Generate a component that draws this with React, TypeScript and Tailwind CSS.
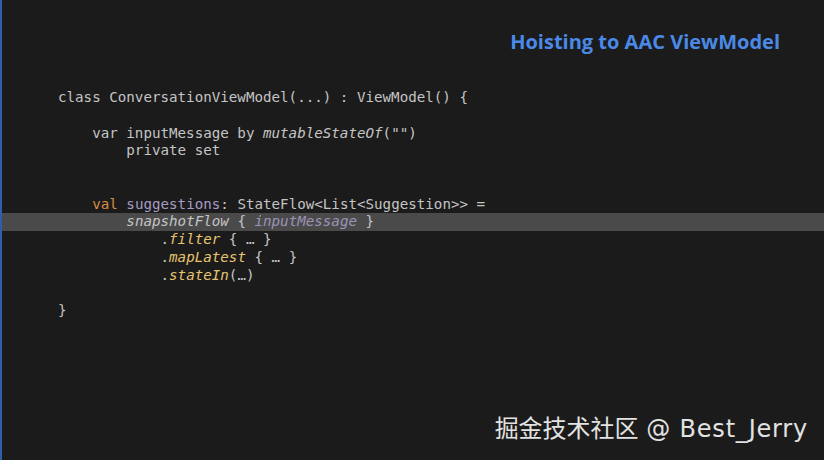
type Seg = { t: string; c?: string };

const G = "text-[#c4c4c4]";
const KW = "text-[#d98b45]";
const PROP = "text-[#a79bc4]";
const FN = "italic text-[#e6c46e]";
const IT = "italic text-[#c4c4c4]";

const lines: { segs: Seg[]; hl?: boolean }[] = [
  { segs: [{ t: "class ConversationViewModel(...) : ViewModel() {" }] },
  { segs: [] },
  {
    segs: [
      { t: "    var inputMessage by " },
      { t: "mutableStateOf", c: IT },
      { t: '("")' },
    ],
  },
  { segs: [{ t: "        private set" }] },
  { segs: [] },
  { segs: [] },
  {
    segs: [
      { t: "    " },
      { t: "val", c: KW },
      { t: " " },
      { t: "suggestions", c: PROP },
      { t: ": StateFlow<List<Suggestion>> =" },
    ],
  },
  {
    hl: true,
    segs: [
      { t: "        " },
      { t: "snapshotFlow", c: IT },
      { t: " { " },
      { t: "inputMessage", c: "italic text-[#9d92b8]" },
      { t: " }" },
    ],
  },
  { segs: [{ t: "            ." }, { t: "filter", c: FN }, { t: " { … }" }] },
  { segs: [{ t: "            ." }, { t: "mapLatest", c: FN }, { t: " { … }" }] },
  { segs: [{ t: "            ." }, { t: "stateIn", c: FN }, { t: "(…)" }] },
  { segs: [] },
  { segs: [{ t: "}" }] },
];

const App = () => {
  return (
    <div className="w-[824px] h-[460px] bg-[#1b1b1b] border-l-2 border-[#2f5fa8] flex flex-col overflow-hidden">
      <div className="flex justify-end pt-[29px] pr-[44px]">
        <h1
          className="text-[20px] leading-[26px] font-bold text-[#4a8ae6]"
          style={{ fontFamily: "'Open Sans', Roboto, sans-serif" }}
        >
          Hoisting to AAC ViewModel
        </h1>
      </div>
      <div
        className="mt-[34px] text-[14.2px] leading-[17.75px] whitespace-pre"
        style={{ fontFamily: "'DejaVu Sans Mono', 'Liberation Mono', monospace" }}
      >
        {lines.map((ln, i) => (
          <div
            key={i}
            className={`pl-[56px] h-[17.75px] ${G} ${ln.hl ? "bg-[#4a4a4a]" : ""}`}
          >
            {ln.segs.length === 0
              ? " "
              : ln.segs.map((s, j) => (
                  <span key={j} className={s.c ?? ""}>
                    {s.t}
                  </span>
                ))}
          </div>
        ))}
      </div>
      <div className="mt-auto flex justify-end pr-[16px] pb-[16px]">
        <span
          className="text-[24px] leading-[30px] text-[#e2e2e2]"
          style={{ fontFamily: "'DejaVu Sans', 'Noto Sans CJK SC', sans-serif" }}
        >
          掘金技术社区 <span className="tracking-[0.8px]">@ Best_Jerry</span>
        </span>
      </div>
    </div>
  );
};

export default App;
